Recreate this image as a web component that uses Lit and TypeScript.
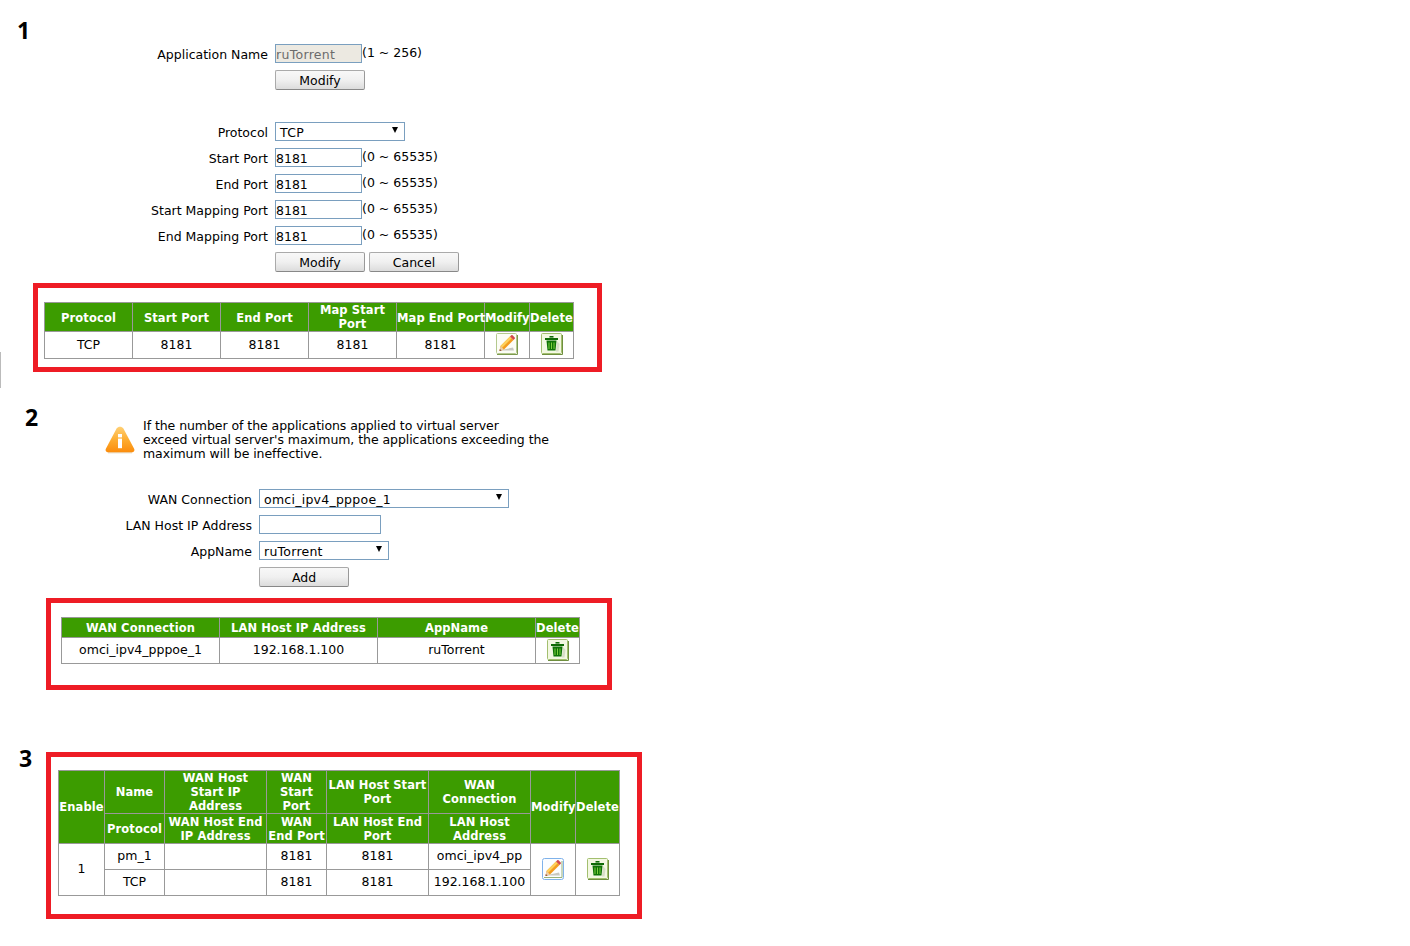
import { LitElement, html, css, svg } from "lit";
import { customElement } from "lit/decorators.js";

const pencil = (hover = false) => html`<svg class="ico" width="22" height="22" viewBox="0 0 22 22">
  ${hover
    ? svg`<rect x="0.5" y="0.5" width="21" height="21" rx="2" fill="#fbfdff" stroke="#7fb2ea"/><path d="M2 19.5H20V3" fill="none" stroke="#98b27a"/>`
    : svg`<rect x="0.5" y="0.5" width="20" height="20" rx="1" fill="#fcfdf6" stroke="#b4c98e"/><path d="M1 21.5H21.5V2" fill="none" stroke="#7d9a4e"/>`}
  <path d="M3 17.5l14-3 1 3z" fill="#c8c8bf"/>
  <path d="M4.5 13L14 3.5l3.5 3.5L8 16.5l-4.5 1.5z" fill="#f39c1f"/>
  <path d="M4.5 13L14 3.5l1.7 1.7L6.2 14.7z" fill="#fdd05c"/>
  <path d="M14 3.5l1.2-1.2a1 1 0 0 1 1.4 0l2.1 2.1a1 1 0 0 1 0 1.4L17.5 7z" fill="#d2474c"/>
  <path d="M3.5 18l1-5 3.5 3.5z" fill="#edcfa6"/>
  <path d="M3.5 18l.4-2 1.6 1.4z" fill="#7a3b34"/>
</svg>`;

const trash = () => html`<svg class="ico" width="22" height="22" viewBox="0 0 22 22">
  <rect x="0.5" y="0.5" width="20" height="20" rx="1" fill="#f3f8e2" stroke="#a3bf6f"/>
  <path d="M1 21.5H21.5V2" fill="none" stroke="#6f8f3e"/>
  <rect x="8.5" y="3" width="4" height="1.6" fill="#0f6a06"/>
  <rect x="4" y="5" width="13" height="2" fill="#0f6a06"/>
  <path d="M16 8l2.5 3-1 7.5H15z" fill="#c8d0b8" opacity=".65"/>
  <path d="M5.5 7.5h10l-1 10h-8z" fill="#0f7306"/>
  <path d="M8 9.5v6.5M10.5 9.5v6.5M13 9.5v6.5" stroke="#7fd03c" stroke-width="1"/>
</svg>`;

const warn = html`<svg width="30" height="28" viewBox="0 0 30 28">
  <defs><linearGradient id="w" x1="0" y1="0" x2="0" y2="1"><stop offset="0" stop-color="#ffd074"/><stop offset=".55" stop-color="#fdaa2c"/><stop offset="1" stop-color="#fb8c0c"/></linearGradient></defs>
  <path d="M3 26.6h24" stroke="#e9dcc4" stroke-width="1.6"/>
  <path d="M11.6 2.6c1.6-2.6 5.2-2.6 6.8 0l10.6 19.8c1.2 2.4-.3 3.9-2.6 3.9H3.6c-2.3 0-3.8-1.5-2.6-3.9z" fill="url(#w)"/>
  <rect x="13" y="8" width="4" height="3.4" fill="#fff"/>
  <rect x="13" y="12.6" width="4" height="9.6" fill="#fff"/>
</svg>`;

@customElement("app-root")
export class AppRoot extends LitElement {
  static styles = css`
    :host { display: block; width: 1410px; height: 946px; background: #fff; overflow: hidden; color: #000;
      font: 12.5px/14px "DejaVu Sans", Verdana, sans-serif; position: relative; }
    .num { font: 700 23px/28px "Open Sans", sans-serif; color: #000; }
    .n1 { padding: 16px 0 0 17px; height: 28px; }
    .n2 { padding-left: 25px; margin-top: 31px; height: 28px; }
    .n3 { padding-left: 19px; margin-top: 54px; }

    .form { display: grid; row-gap: 7px; align-items: start; }
    .f1 { grid-template-columns: 268px auto; column-gap: 7px; }
    .f2 { grid-template-columns: 252px auto; column-gap: 7px; }
    .lbl { box-sizing: border-box; text-align: right; line-height: 19px; height: 19px; padding-top: 1px; white-space: nowrap; }
    .ctl { display: flex; align-items: flex-start; height: 19px; }
    .btnrow { display: flex; gap: 4px; height: 20px; }
    .hint { line-height: 16px; margin-top: 1px; white-space: nowrap; }
    .input { box-sizing: border-box; height: 19px; width: 87px; border: 1px solid #7a9fbf; background: #fff; padding: 2px 0 0 0; line-height: 15px; overflow: hidden; }
    .input.dis { background: #ece9e1; color: #6b6b6b; letter-spacing: .3px; }
    .w122 { width: 122px; }
    .select { box-sizing: border-box; height: 19px; border: 1px solid #7a9fbf; background: #fff; padding: 2px 0 0 4px; line-height: 15px; letter-spacing: .25px; display: flex; justify-content: space-between; }
    .select i { width: 0; height: 0; border: 3.5px solid transparent; border-top: 6px solid #000; border-bottom: 0; margin: 2px 6px 0 0; }
    .w130 { width: 130px; } .w250 { width: 250px; }
    .btn { box-sizing: border-box; width: 90px; height: 20px; border: 1px solid #aaa; border-right-color: #999; border-bottom-color: #888; border-radius: 2px;
      background: linear-gradient(#f8f8f8, #f0f0f0 50%, #dcdcdc); text-align: center; line-height: 19px; }
    .gap1 { height: 32px; }
    .sp { grid-column: 1; }

    .red { box-sizing: border-box; border: 5px solid #ee1c25; }
    .r1 { margin: 11px 0 0 33px; width: 569px; height: 89px; padding: 14px 0 0 6px; }
    .r2 { margin: 11px 0 0 46px; width: 566px; height: 92px; padding: 14px 0 0 10px; }
    .r3 { margin: -20px 0 0 46px; width: 596px; height: 167px; padding: 13px 0 0 7px; }

    table { border-collapse: collapse; table-layout: fixed; text-align: center; }
    th, td { border: 1px solid #999; padding: 0; overflow: visible; white-space: normal; }
    th { background: #3c9c00; color: #fff; font-weight: 700; font-size: 11.5px; line-height: 14px; letter-spacing: .1px; }
    th .s { display: block; padding-top: 1px; }
    td { background: #fff; }
    .t2 td, .t3 td { padding-bottom: 1px; }
    .t1 td.icon, .t2 td.icon { vertical-align: top; padding: 1px 0 0; }
    .t3 td.icon { padding-bottom: 2px; }
    .ico { display: block; margin: 0 auto; }
    .t1 { width: 529px; } .t2 { width: 518px; } .t3 { width: 561px; }
    .t1 tr.h { height: 29px; } .t1 tr.b { height: 27px; }
    .t2 tr.h { height: 20px; } .t2 tr.b { height: 26px; }
    .t3 tr.h1 { height: 43px; } .t3 tr.h2 { height: 30px; } .t3 tr.b { height: 26px; }

    .notice { display: flex; margin-left: 105px; align-items: flex-start; margin-top: -19px; height: 77px; }
    .notice svg { flex: none; margin-top: 14px; }
    .notice p { margin: 0 0 0 8px; line-height: 14px; padding-top: 7px; white-space: nowrap; letter-spacing: -.06px; }
    .stray { position: absolute; left: 0; top: 352px; width: 1px; height: 36px; background: #bbb; }
    .nw { white-space: nowrap; }
  `;

  private row(label: string, ctl: unknown) {
    return html`<div class="lbl">${label}</div><div class="ctl">${ctl}</div>`;
  }

  private port(label: string) {
    return this.row(label, html`<div class="input">8181</div><div class="hint">(0 ~ 65535)</div>`);
  }

  private th(text: string) {
    return html`<span class="s">${text}</span>`;
  }

  render() {
    return html`
      <div class="stray"></div>
      <div class="num n1">1</div>
      <div class="form f1">
        ${this.row("Application Name", html`<div class="input dis">ruTorrent</div><div class="hint">(1 ~ 256)</div>`)}
        <div class="sp"></div><div class="btnrow"><div class="btn">Modify</div></div>
      </div>
      <div class="gap1"></div>
      <div class="form f1">
        ${this.row("Protocol", html`<div class="select w130">TCP<i></i></div>`)}
        ${this.port("Start Port")}
        ${this.port("End Port")}
        ${this.port("Start Mapping Port")}
        ${this.port("End Mapping Port")}
        <div class="sp"></div><div class="btnrow"><div class="btn">Modify</div><div class="btn">Cancel</div></div>
      </div>

      <div class="red r1">
        <table class="t1">
          <colgroup><col width="88"><col width="88"><col width="88"><col width="88"><col width="88"><col width="45"><col width="44"></colgroup>
          <tr class="h"><th>${this.th("Protocol")}</th><th>${this.th("Start Port")}</th><th>${this.th("End Port")}</th><th>Map Start Port</th><th class="nw">${this.th("Map End Port")}</th><th>${this.th("Modify")}</th><th>${this.th("Delete")}</th></tr>
          <tr class="b"><td>TCP</td><td>8181</td><td>8181</td><td>8181</td><td>8181</td><td class="icon">${pencil()}</td><td class="icon">${trash()}</td></tr>
        </table>
      </div>

      <div class="num n2">2</div>
      <div class="notice">
        ${warn}
        <p>If the number of the applications applied to virtual server<br>exceed virtual server's maximum, the applications exceeding the<br>maximum will be ineffective.</p>
      </div>
      <div class="form f2">
        ${this.row("WAN Connection", html`<div class="select w250">omci_ipv4_pppoe_1<i></i></div>`)}
        ${this.row("LAN Host IP Address", html`<div class="input w122"></div>`)}
        ${this.row("AppName", html`<div class="select w130">ruTorrent<i></i></div>`)}
        <div class="sp"></div><div class="btnrow"><div class="btn">Add</div></div>
      </div>

      <div class="red r2">
        <table class="t2">
          <colgroup><col width="158"><col width="158"><col width="158"><col width="44"></colgroup>
          <tr class="h"><th>WAN Connection</th><th>LAN Host IP Address</th><th>AppName</th><th>Delete</th></tr>
          <tr class="b"><td>omci_ipv4_pppoe_1</td><td>192.168.1.100</td><td>ruTorrent</td><td class="icon">${trash()}</td></tr>
        </table>
      </div>

      <div class="num n3">3</div>
      <div class="red r3">
        <table class="t3">
          <colgroup><col width="46"><col width="60"><col width="102"><col width="60"><col width="102"><col width="102"><col width="45"><col width="44"></colgroup>
          <tr class="h1"><th rowspan="2">Enable</th><th>Name</th><th>WAN Host Start IP Address</th><th>WAN Start Port</th><th>LAN Host Start Port</th><th>WAN Connection</th><th rowspan="2">Modify</th><th rowspan="2">Delete</th></tr>
          <tr class="h2"><th>Protocol</th><th>WAN Host End IP Address</th><th>WAN End Port</th><th>LAN Host End Port</th><th>LAN Host Address</th></tr>
          <tr class="b"><td rowspan="2">1</td><td>pm_1</td><td></td><td>8181</td><td>8181</td><td>omci_ipv4_pp</td><td class="icon" rowspan="2">${pencil(true)}</td><td class="icon" rowspan="2">${trash()}</td></tr>
          <tr class="b"><td>TCP</td><td></td><td>8181</td><td>8181</td><td>192.168.1.100</td></tr>
        </table>
      </div>
    `;
  }
}
